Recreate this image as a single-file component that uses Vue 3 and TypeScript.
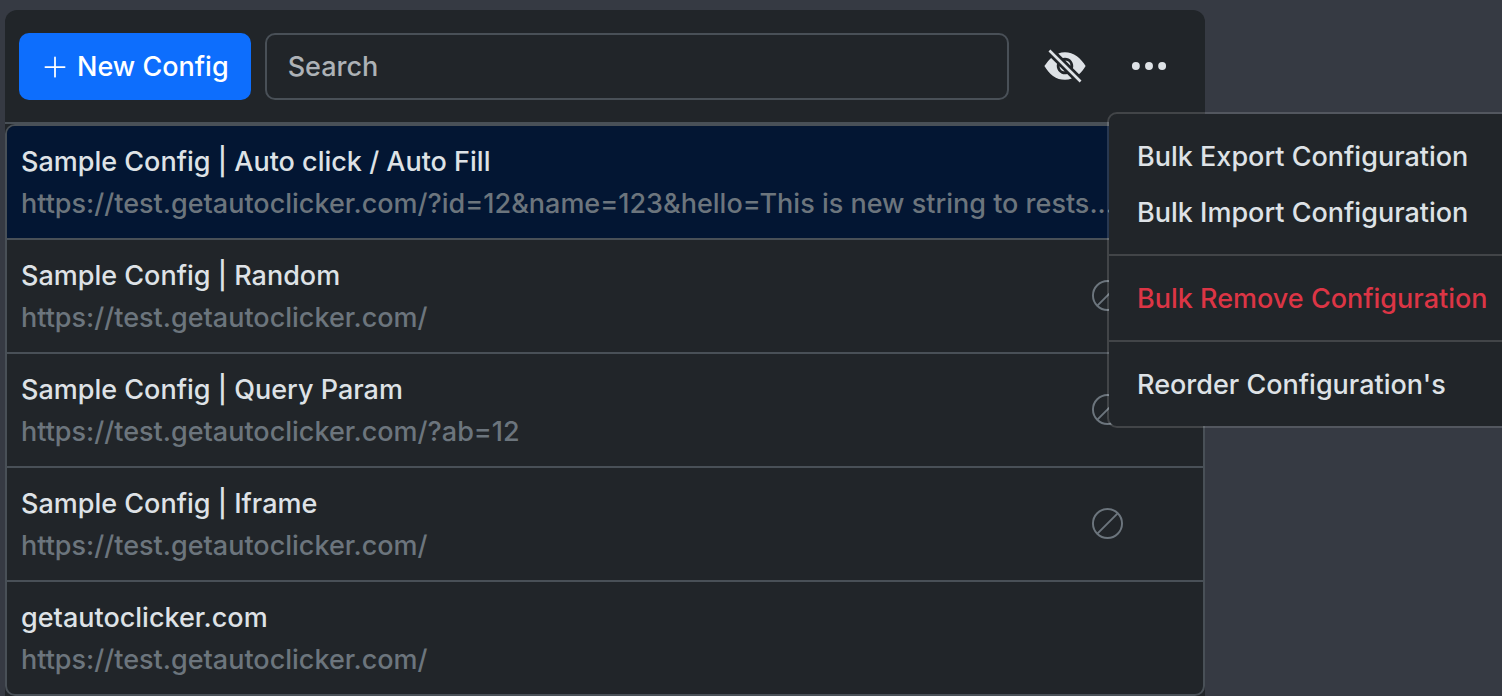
<script setup lang="ts">
import { computed, ref } from 'vue'

interface Config {
  id: number
  name: string
  url: string
  disabled: boolean
}

const configs = ref<Config[]>([
  {
    id: 1,
    name: 'Sample Config | Auto click / Auto Fill',
    url: 'https://test.getautoclicker.com/?id=12&name=123&hello=This is new string to rests...',
    disabled: false,
  },
  { id: 2, name: 'Sample Config | Random', url: 'https://test.getautoclicker.com/', disabled: true },
  { id: 3, name: 'Sample Config | Query Param', url: 'https://test.getautoclicker.com/?ab=12', disabled: true },
  { id: 4, name: 'Sample Config | Iframe', url: 'https://test.getautoclicker.com/', disabled: true },
  { id: 5, name: 'getautoclicker.com', url: 'https://test.getautoclicker.com/', disabled: false },
])

const search = ref('')
const selectedId = ref(1)
const menuOpen = ref(true)

const visibleConfigs = computed(() => {
  const term = search.value.trim().toLowerCase()
  return configs.value.filter((c) => (c.name + ' ' + c.url).toLowerCase().includes(term))
})
</script>

<template>
  <main class="page">
    <section class="card">
      <header class="toolbar">
        <button type="button" class="btn-new">
          <svg class="icon-plus" viewBox="0 0 16 16" fill="none" stroke="currentColor" stroke-linecap="round" aria-hidden="true">
            <path d="M8 2.5v11M2.5 8h11" />
          </svg>
          <span>New Config</span>
        </button>
        <input v-model="search" class="search" type="search" placeholder="Search" aria-label="Search" />
        <div class="actions">
          <button type="button" class="icon-btn" aria-label="Hide disabled configurations">
            <svg class="icon-eye" viewBox="0 0 512 512" fill="currentColor" aria-hidden="true">
              <path d="M63.998 86.004l21.998-21.998L448 426.01l-21.998 21.998zM259.34 192.09l60.57 60.57a64.07 64.07 0 0 0-60.57-60.57zM252.66 319.91l-60.57-60.57a64.07 64.07 0 0 0 60.57 60.57z" />
              <path d="M256 352a96 96 0 0 1-92.6-121.34l-69.07-69.08C66.12 187.42 39.24 221.14 16 256c26.42 44 62.56 89.24 100.2 115.18C159.38 400.92 206.33 416 255.76 416A233.47 233.47 0 0 0 335 402.2l-53.61-53.6A95.84 95.84 0 0 1 256 352zM256 160a96 96 0 0 1 92.6 121.34L419.26 352c29.15-26.25 56.07-61.56 76.74-96-26.38-43.43-62.9-88.56-101.18-114.82C351.1 111.2 304.31 96 255.76 96a222.92 222.92 0 0 0-78.21 14.29l53.11 53.11A95.84 95.84 0 0 1 256 160z" />
            </svg>
          </button>
          <div class="dropdown">
            <button type="button" class="icon-btn" aria-label="More" :aria-expanded="menuOpen" @click="menuOpen = !menuOpen">
              <svg class="icon-dots" viewBox="0 0 16 16" fill="currentColor" aria-hidden="true">
                <circle cx="3" cy="8" r="1.5" />
                <circle cx="8" cy="8" r="1.5" />
                <circle cx="13" cy="8" r="1.5" />
              </svg>
            </button>
            <div v-if="menuOpen" class="menu">
              <button type="button" class="menu-item">Bulk Export Configuration</button>
              <button type="button" class="menu-item">Bulk Import Configuration</button>
              <hr class="divider" />
              <button type="button" class="menu-item danger">Bulk Remove Configuration</button>
              <hr class="divider" />
              <button type="button" class="menu-item">Reorder Configuration's</button>
            </div>
          </div>
        </div>
      </header>

      <ul class="list">
        <li v-for="config in visibleConfigs" :key="config.id" class="list-item">
          <button
            type="button"
            class="row"
            :class="{ selected: config.id === selectedId }"
            @click="selectedId = config.id"
          >
            <span class="text">
              <span class="name">{{ config.name }}</span>
              <span class="url">{{ config.url }}</span>
            </span>
            <svg v-if="config.disabled" class="icon-ban" viewBox="0 0 16 16" fill="none" stroke="currentColor" aria-hidden="true">
              <circle cx="8" cy="8" r="7.5" />
              <path d="M2.9 13.1 13.1 2.9" />
            </svg>
          </button>
        </li>
      </ul>
    </section>
  </main>
</template>

<style>
body {
  background: #363a43;
}
</style>

<style scoped>
.page {
  box-sizing: border-box;
  min-height: 100vh;
  padding: 10px 5px 0;
  overflow: hidden;
  background: #363a43;
  color: #dee2e6;
  font-family: Inter, "Liberation Sans", sans-serif;
  font-size: 27px;
  font-weight: 500;
  line-height: 42px;
}

.page *,
.page *::before {
  box-sizing: border-box;
}

button,
input {
  margin: 0;
  font: inherit;
  color: inherit;
}

button {
  border: 0;
  background: none;
  cursor: pointer;
}

.card {
  max-width: 1200px;
  border-radius: 12px 12px 0 0;
  background: #212529;
}

.toolbar {
  display: flex;
  align-items: flex-start;
  gap: 14px;
  padding: 23px 14px 22px;
  border-bottom: 2px solid #495057;
}

.btn-new {
  display: flex;
  flex: none;
  align-items: center;
  gap: 8px;
  min-height: 67px;
  padding: 0 22px;
  border-radius: 10px;
  background: #0d6efd;
  color: #fff;
  white-space: nowrap;
}

.icon-plus {
  width: 28px;
  height: 28px;
}

.search {
  flex: 1;
  min-width: 0;
  min-height: 67px;
  padding: 0 21px;
  border: 2px solid #495057;
  border-radius: 10px;
  outline: none;
  background: #212529;
  appearance: none;
}

.search::placeholder {
  color: rgba(222, 226, 230, 0.75);
  opacity: 1;
}

.actions {
  display: flex;
  flex: none;
}

.icon-btn {
  display: flex;
  align-items: center;
  justify-content: center;
  width: 84px;
  height: 66px;
  padding: 0;
}

.icon-eye {
  width: 44px;
  height: 44px;
}

.icon-dots {
  width: 42px;
  height: 42px;
}

.dropdown {
  position: relative;
}

.menu {
  position: absolute;
  z-index: 10;
  top: calc(100% + 13px);
  left: 0;
  padding: 14px 0;
  border: 2px solid rgba(255, 255, 255, 0.15);
  border-radius: 10px;
  background: #212529;
  background-clip: padding-box;
}

.menu-item {
  display: block;
  width: 100%;
  padding: 8px 28px 6px;
  text-align: left;
  white-space: nowrap;
}

.menu-item.danger {
  color: #dc3545;
}

.divider {
  height: 2px;
  margin: 14px 0;
  border: 0;
  background: rgba(255, 255, 255, 0.15);
}

.list {
  margin: 0;
  padding: 0;
  overflow: hidden;
  border: 2px solid #495057;
  border-radius: 10px;
  list-style: none;
}

.list-item + .list-item {
  border-top: 2px solid #495057;
}

.row {
  display: flex;
  align-items: center;
  width: 100%;
  padding: 15px 80px 13px 14px;
  text-align: left;
}

.row.selected {
  background: #031633;
}

.text {
  flex: 1;
  min-width: 0;
}

.name,
.url {
  display: block;
  overflow: hidden;
  text-overflow: ellipsis;
  white-space: nowrap;
}

.url {
  color: #6c757d;
}

.icon-ban {
  flex: none;
  width: 31px;
  height: 31px;
  margin-bottom: 3px;
  color: #6c757d;
}
</style>
